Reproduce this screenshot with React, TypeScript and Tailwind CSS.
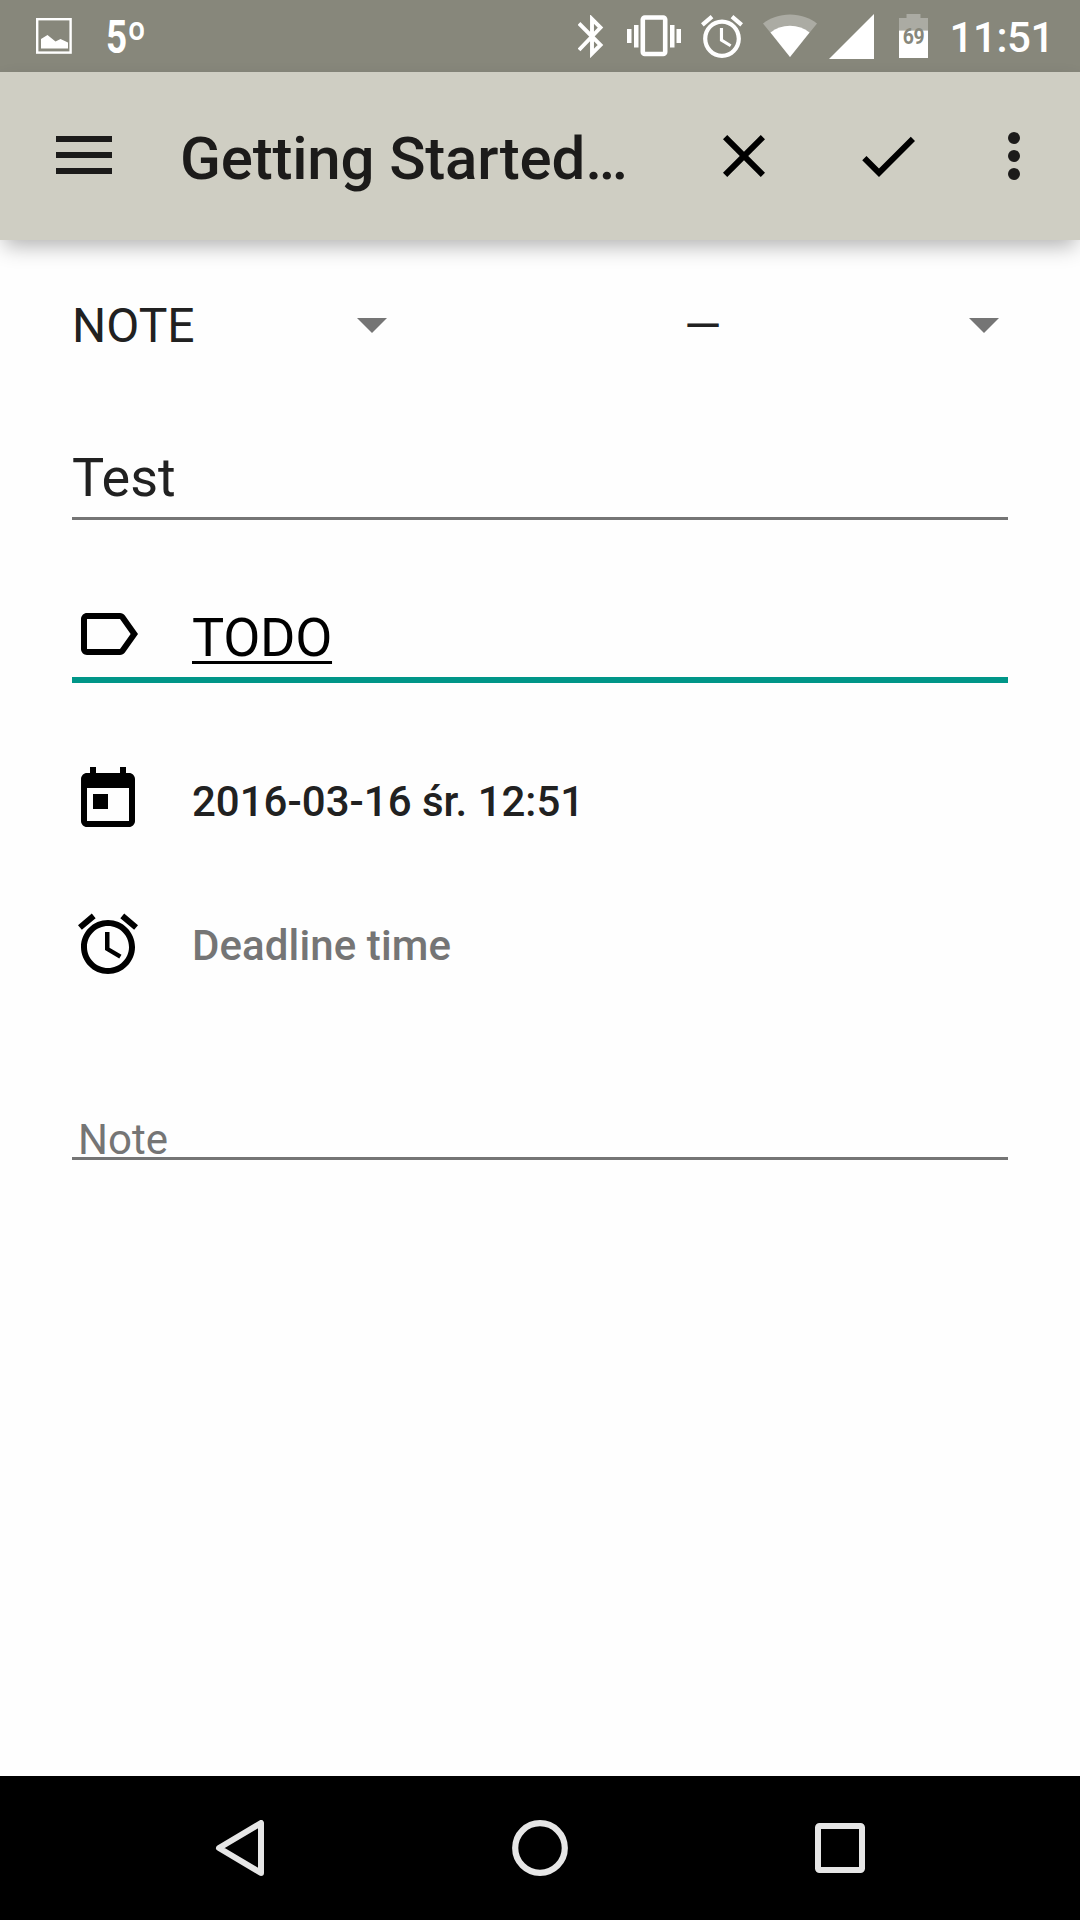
import React from "react";

const MaterialIcon = ({ d, className = "" }: { d: string; className?: string }) => (
  <svg viewBox="0 0 24 24" className={"size-[72px] shrink-0 fill-black " + className}>
    <path d={d} />
  </svg>
);

const closePath =
  "M19 6.41 17.59 5 12 10.59 6.41 5 5 6.41 10.59 12 5 17.59 6.41 19 12 13.41 17.59 19 19 17.59 13.41 12z";
const checkPath = "M9 16.17 4.83 12l-1.42 1.41L9 19 21 7l-1.41-1.41z";
const labelPath =
  "M17.63 5.84C17.27 5.33 16.67 5 16 5L5 5.01C3.9 5.01 3 5.9 3 7v10c0 1.1.9 1.99 2 1.99L16 19c.67 0 1.27-.33 1.63-.84L22 12l-4.37-6.16zM16 17H5V7h11l3.55 5L16 17z";
const todayPath =
  "M19 3h-1V1h-2v2H8V1H6v2H5c-1.11 0-1.99.9-1.99 2L3 19c0 1.1.89 2 2 2h14c1.1 0 2-.9 2-2V5c0-1.1-.9-2-2-2zm0 16H5V8h14v11zM7 10h5v5H7z";
const alarmPath =
  "M22 5.72l-4.6-3.86-1.29 1.53 4.6 3.86L22 5.72zM7.88 3.39L6.6 1.86 2 5.71l1.29 1.53 4.59-3.85zM12.5 8H11v6l4.75 2.85.75-1.23-4-2.37V8zM12 4c-4.97 0-9 4.03-9 9s4.02 9 9 9c4.97 0 9-4.03 9-9s-4.03-9-9-9zm0 16c-3.87 0-7-3.13-7-7s3.13-7 7-7 7 3.13 7 7-3.13 7-7 7z";

function StatusBar() {
  return (
    <header className="flex h-[72px] items-start bg-[#87877b] text-white">
      <svg viewBox="0 0 36 36" className="mt-[18px] ml-9 size-9 fill-none">
        <rect x="1.2" y="1.2" width="33.4" height="33.4" stroke="white" strokeWidth="2.4" />
        <path fill="white" d="M5 30.5V21l6.5-4 8 6.500 5-2.500 7.500 3.500v6z" />
      </svg>
      <div className="mt-[12px] ml-[34px] flex w-[42px] items-start font-['Roboto'] font-bold">
        <span className="origin-left scale-x-[0.8] text-[46px] leading-[51px]">5</span>
        <span className="-ml-[5px] origin-left scale-x-[0.9] text-[47px] leading-[53px] font-bold">º</span>
      </div>
      <div className="ml-auto flex h-[72px] items-start">
        <svg viewBox="0 0 26 43" className="mt-[15px] mr-[23px] h-[43px] w-[26px] fill-none stroke-white">
          <path strokeWidth="3.9" d="M1 8.500 22.500 30 14 38.500V4l8.500 8.500L1 35" />
        </svg>
        <svg viewBox="0 0 54 42" className="mt-[15px] mr-[20px] h-[42px] w-[54px] fill-white">
          <rect x="0" y="14" width="4.500" height="14" />
          <rect x="7" y="10" width="4.500" height="22.500" />
          <rect x="15.800" y="2.500" width="22.400" height="36.500" rx="2" fill="none" stroke="white" strokeWidth="4.600" />
          <rect x="43" y="10" width="4.500" height="22.500" />
          <rect x="49.500" y="14" width="4.500" height="14" />
        </svg>
        <svg viewBox="2 1.860 20 20.140" className="mt-[15px] mr-[20px] h-[43px] w-[42px] fill-white" preserveAspectRatio="none">
          <path d={alarmPath} />
        </svg>
        <svg viewBox="0 0 54 43" className="mt-[14px] mr-[12px] h-[43px] w-[54px] fill-white">
          <path fillOpacity=".3" d="M27 43 0 9.500C7 4 16.500.5 27 .5S47 4 54 9.500z" />
          <path d="M27 43 7.500 18.500C13 14 19.500 11.700 27 11.700S41 14 46.500 18.500z" />
        </svg>
        <svg viewBox="0 0 45 45" className="mt-[14px] mr-[25px] size-[45px] fill-white">
          <path d="M45 0v45H0z" />
        </svg>
        <div className="relative mt-[14px] mr-[21px] h-[44px] w-[29px]">
          <svg viewBox="0 0 29 44" className="h-[44px] w-[29px] fill-white">
            <path fillOpacity=".3" d="M7.500 0h14v4H29v12.500H0V4h7.500z" />
            <path d="M0 16.500h29V44H0z" />
          </svg>
          <span className="absolute inset-x-0 top-[11px] origin-center scale-x-[0.88] text-center font-['Roboto'] text-[22px] leading-6 font-bold tracking-[-0.5px] text-[#87877b]">
            69
          </span>
        </div>
        <span className="mr-[26px] text-[42px] leading-[75px] font-medium tracking-[-0.4px]">11:51</span>
      </div>
    </header>
  );
}

function AppBar() {
  return (
    <div className="relative flex h-[168px] items-center bg-[#cfcec3] shadow-[0_10px_20px_-4px_rgba(0,0,0,0.3)]">
      <div className="ml-[56px] flex w-[124px] flex-col gap-[10px] pb-[2px]">
        <i className="h-[6px] w-14 bg-[#1c1b1a]" />
        <i className="h-[6px] w-14 bg-[#1c1b1a]" />
        <i className="h-[6px] w-14 bg-[#1c1b1a]" />
      </div>
      <h1 className="w-[528px] pt-[5px] text-[60px] leading-[72px] font-medium tracking-[-0.18px] whitespace-nowrap text-[#1c1b1a]">
        Getting Started…
      </h1>
      <MaterialIcon d={closePath} />
      <MaterialIcon d={checkPath} className="ml-[72px]" />
      <div className="ml-[84px] flex flex-col gap-[6px]">
        <i className="size-3 rounded-full bg-[#1c1b1a]" />
        <i className="size-3 rounded-full bg-[#1c1b1a]" />
        <i className="size-3 rounded-full bg-[#1c1b1a]" />
      </div>
    </div>
  );
}

const Caret = () => (
  <svg viewBox="0 0 30 15" className="mb-[2px] h-[15px] w-[30px] fill-[#757575]">
    <path d="M0 0h30L15 15z" />
  </svg>
);

function Form() {
  return (
    <main className="flex-1 px-[72px] text-[#212121]">
      <div className="mt-[58px] flex h-14 items-center text-[48px] leading-[56px]">
        <span className="w-[285px]">NOTE</span>
        <Caret />
        <span className="ml-[297px] w-[285px]">—</span>
        <Caret />
      </div>
      <div className="mt-[92px] h-[74px] border-b-[3px] border-[#757575] text-[54px] leading-[64px]">Test</div>
      <div className="mt-[78px] flex h-[85px] items-start border-b-[6px] border-[#009688]">
        <MaterialIcon d={labelPath} />
        <span className="mt-2 ml-12 text-[54px] leading-[64px] tracking-[-0.3px] text-black underline decoration-[3px] underline-offset-[5px] [text-decoration-skip-ink:none]">
          TODO
        </span>
      </div>
      <div className="mt-[81px] flex h-[72px] items-start text-[42px] leading-[76px] font-medium">
        <MaterialIcon d={todayPath} />
        <span className="ml-12">2016-03-16 śr. 12:51</span>
      </div>
      <div className="mt-[72px] flex h-[72px] items-start text-[42px] leading-[76px] font-medium text-[#757575]">
        <MaterialIcon d={alarmPath} />
        <span className="ml-12 tracking-[0.1px]">Deadline time</span>
      </div>
      <div className="mt-[130px] h-[50px] border-b-[3px] border-[#757575] pl-[6px] text-[42px] leading-[59px] text-[#757575]">
        Note
      </div>
    </main>
  );
}

function NavBar() {
  return (
    <nav className="flex h-[144px] items-center justify-center gap-[244px] bg-black">
      <svg viewBox="0 0 56 56" className="size-14 fill-none stroke-[#e6e6e6]">
        <path strokeWidth="6" strokeLinejoin="round" d="M49 3v50L7 28z" />
      </svg>
      <svg viewBox="0 0 56 56" className="size-14 fill-none stroke-[#e6e6e6]">
        <circle cx="28" cy="28" r="24.800" strokeWidth="6.200" />
      </svg>
      <svg viewBox="0 0 56 56" className="size-14 fill-none stroke-[#e6e6e6]">
        <rect x="6" y="6" width="44" height="44" rx="1.500" strokeWidth="6" />
      </svg>
    </nav>
  );
}

export default function App() {
  return (
    <div className="flex h-[1920px] w-[1080px] flex-col overflow-hidden bg-[#fefefe] font-['Roboto',sans-serif]">
      <StatusBar />
      <AppBar />
      <Form />
      <NavBar />
    </div>
  );
}
